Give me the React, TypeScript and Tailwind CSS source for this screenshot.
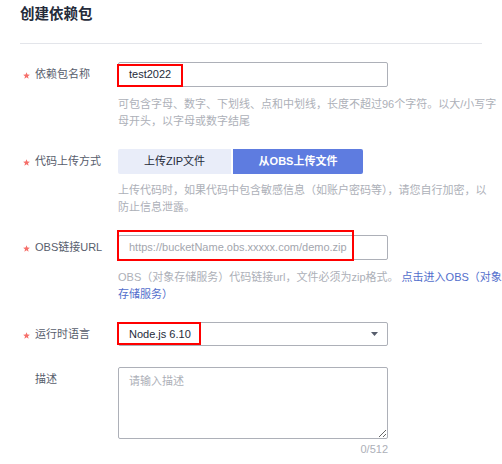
import React from 'react'

const font = { fontFamily: '"Liberation Sans", "Noto Sans CJK SC", sans-serif' }

function Star() {
  return (
    <svg width="7" height="7" viewBox="0 0 10 10" className="shrink-0 mt-[2px]">
      <polygon
        points="5,0.3 6.3,3.6 9.8,3.8 7.1,6 8,9.5 5,7.6 2,9.5 2.9,6 0.2,3.8 3.7,3.6"
        fill="#f66f6a"
      />
    </svg>
  )
}

function Label({ text, required = true, h = 'h-[25px]' }: { text: string; required?: boolean; h?: string }) {
  return (
    <div className={`w-[98px] shrink-0 flex items-center pl-[3px] ${h}`}>
      <span className="w-[12px] flex items-center">{required && <Star />}</span>
      <span className="text-[11px] text-[#575d6c] whitespace-nowrap">{text}</span>
    </div>
  )
}

function Hint({ children }: { children: React.ReactNode }) {
  return (
    <div className="ml-[98px] text-[11px] leading-[17px] text-[#adb0b8] whitespace-nowrap">{children}</div>
  )
}

export default function App() {
  return (
    <div className="w-[502px] h-[464px] bg-white overflow-hidden" style={font}>
      <div className="mx-[20px] h-[44px] border-b border-[#e3e5ea]">
        <h1 className="pt-[7px] text-[14.5px] leading-[15px] font-bold text-[#252b3a]">创建依赖包</h1>
      </div>

      <div className="px-[20px]">
        {/* name */}
        <div className="flex mt-[18px]">
          <Label text="依赖包名称" />
          <div className="relative">
            <div className="w-[270px] h-[25px] border border-[#adb0b8] rounded-[2px] flex items-center pl-[10px] text-[11px] text-[#252b3a]">
              test2022
            </div>
            <div className="absolute left-[-1px] top-[2px] w-[66px] h-[23px] border-2 border-[#ff0000]" />
          </div>
        </div>
        <div className="mt-[9px]">
          <Hint>
            可包含字母、数字、下划线、点和中划线，长度不超过96个字符。以大/小写字
            <br />
            母开头，以字母或数字结尾
          </Hint>
        </div>

        {/* upload mode */}
        <div className="flex mt-[19px]">
          <Label text="代码上传方式" />
          <div className="flex gap-[2px]">
            <button className="w-[113px] h-[25px] bg-[#e9edf9] text-[11px] text-[#252b3a] rounded-l-[2px]">
              上传ZIP文件
            </button>
            <button className="w-[130px] h-[25px] bg-[#5e7ce0] text-[11px] font-bold text-white rounded-r-[2px]">
              从OBS上传文件
            </button>
          </div>
        </div>
        <div className="mt-[8px]">
          <Hint>
            上传代码时，如果代码中包含敏感信息（如账户密码等），请您自行加密，以
            <br />
            防止信息泄露。
          </Hint>
        </div>

        {/* obs url */}
        <div className="flex mt-[19px]">
          <Label text="OBS链接URL" />
          <div className="relative">
            <div className="w-[270px] h-[25px] border border-[#adb0b8] rounded-[2px] flex items-center pl-[10px] text-[11px] text-[#a3a6ae]">
              https://bucketName.obs.xxxxx.com/demo.zip
            </div>
            <div className="absolute left-[-1px] top-[-5px] w-[237px] h-[31px] border-2 border-[#ff0000]" />
          </div>
        </div>
        <div className="mt-[9px]">
          <Hint>
            OBS（对象存储服务）代码链接url，文件必须为zip格式。{' '}
            <span className="text-[#526ecc]">点击进入OBS（对象</span>
            <br />
            <span className="text-[#526ecc]">存储服务）</span>
          </Hint>
        </div>

        {/* runtime */}
        <div className="flex mt-[19px]">
          <Label text="运行时语言" h="h-[24px]" />
          <div className="relative">
            <div className="w-[270px] h-[24px] border border-[#adb0b8] rounded-[2px] flex items-center justify-between pl-[10px] pr-[9px] text-[11px] text-[#252b3a]">
              <span>Node.js 6.10</span>
              <svg width="7" height="4" viewBox="0 0 7 4">
                <polygon points="0,0 7,0 3.5,4" fill="#575d6c" />
              </svg>
            </div>
            <div className="absolute left-[-1px] top-0 w-[84px] h-[23px] border-2 border-[#ff0000]" />
          </div>
        </div>

        {/* description */}
        <div className="flex mt-[21px]">
          <Label text="描述" required={false} />
          <div className="w-[270px]">
            <textarea
              placeholder="请输入描述"
              className="block w-[270px] h-[72px] border border-[#adb0b8] rounded-[2px] px-[10px] py-[6px] text-[11px] leading-[15px] text-[#252b3a] placeholder:text-[#adb0b8] outline-none"
              style={font}
            />
            <div className="mt-[3px] text-right text-[11px] leading-[14px] text-[#adb0b8]">0/512</div>
          </div>
        </div>
      </div>
    </div>
  )
}
